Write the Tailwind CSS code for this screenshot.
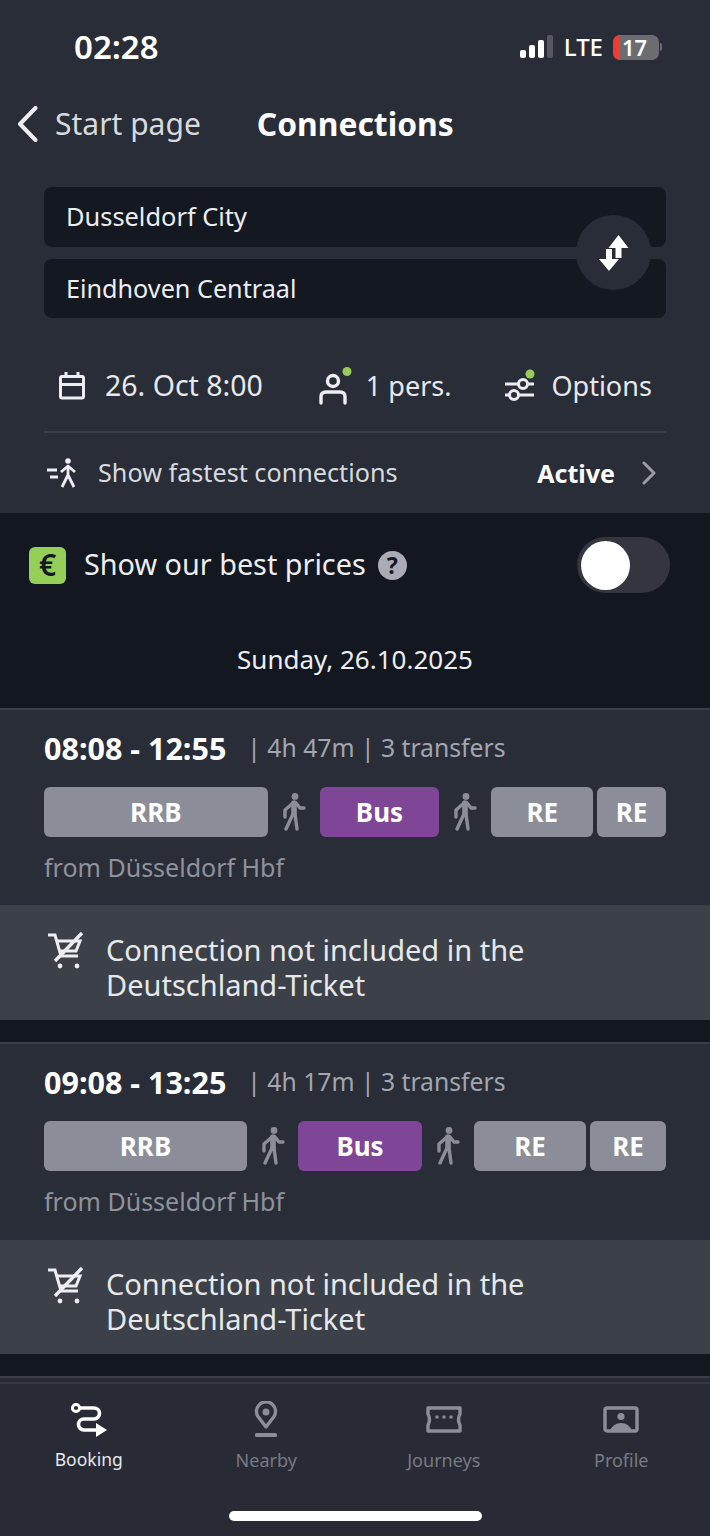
<!DOCTYPE html>
<html>
<head>
<meta charset="utf-8">
<title>Connections</title>
<script src="https://cdn.jsdelivr.net/npm/@tailwindcss/browser@4"></script>
</head>
<body class="bg-[#131720] text-[#eceef1] font-['Noto_Sans',sans-serif]">
<div class="w-[710px] h-[1536px] overflow-hidden flex flex-col">

	<!-- header -->
	<div class="h-[513px] shrink-0 bg-[#292d38] flex flex-col">
		<div class="h-[94px] flex items-center justify-between pl-[74px] pr-[48px]">
			<div class="text-[33px] pb-[2px] font-semibold text-white leading-none">02:28</div>
			<div class="flex items-center">
				<svg width="36" height="24" viewBox="0 0 36 24" fill="#fff"><rect x="2" y="15" width="6" height="8" rx="2"/><rect x="11" y="10" width="6" height="13" rx="2"/><rect x="20" y="5" width="6" height="18" rx="2"/><rect x="29" y="0" width="6" height="23" rx="2" fill="#55585f"/></svg>
				<div class="ml-[10px] text-[24px] font-medium text-white leading-none">LTE</div>
				<div class="ml-[10px] w-[46px] h-[25px] rounded-[7px] bg-[#6b6d72] flex items-center">
					<div class="w-[7px] h-full rounded-l-[7px] bg-[#ef3b30]"></div>
					<div class="ml-[2px] text-[22px] font-semibold text-white leading-none">17</div>
				</div>
				<div class="ml-[1px] w-[2px] h-[8px] rounded-r bg-[#6b6d72]"></div>
			</div>
		</div>

		<div class="h-[62px] flex items-center pl-[17px] pb-[3px]">
			<svg width="21" height="36" viewBox="0 0 21 36" fill="none" stroke="#eceef1" stroke-width="4" stroke-linecap="round" stroke-linejoin="round"><path d="M18.5 2 L3 18 L18.5 34"/></svg>
			<div class="ml-[17px] text-[30px] text-[#d8dade] leading-none">Start page</div>
			<div class="ml-[56px] text-[31.8px] font-bold text-white leading-none">Connections</div>
		</div>

		<div class="relative mx-[44px] mt-[31px] flex flex-col gap-[12px]">
			<div class="h-[60px] rounded-[8px] bg-[#141821] flex items-center pl-[22px] text-[25.4px] leading-none">Dusseldorf City</div>
			<div class="h-[59px] rounded-[8px] bg-[#141821] flex items-center pl-[22px] text-[25.2px] leading-none">Eindhoven Centraal</div>
			<div class="absolute left-[532px] top-[28px] w-[75px] h-[75px] rounded-full bg-[#292d38] flex items-center justify-center">
				<svg width="30" height="36" viewBox="0 0 30 36" fill="#fff"><path d="M19.5 0 L29.5 13 H22.5 V23 H16.5 V13 H9.5 Z"/><path d="M10 36 L0 24 H7 V14 H13 V24 H20 Z"/></svg>
			</div>
		</div>

		<div class="h-[115px] mx-[44px] pt-[22px] shrink-0 flex items-center border-b-2 border-[#3b3f49]">
			<svg class="ml-[15px]" width="26" height="28" viewBox="0 0 26 28" fill="none" stroke="#eceef1" stroke-width="3"><rect x="1.5" y="4.5" width="23" height="21.5" rx="1.5"/><path d="M1.5 12.5 H24.5 M7 0 V5 M19 0 V5"/></svg>
			<div class="ml-[20px] text-[28.5px] text-[#e6e8ec] leading-none">26. Oct 8:00</div>
			<svg class="ml-[56px]" width="34" height="38" viewBox="0 0 34 38" fill="none" stroke="#eceef1" stroke-width="3.4"><circle cx="14" cy="14" r="5.5"/><path d="M2 36 V30 Q2 25 7 25 H21 Q26 25 26 30 V36" stroke-linecap="round"/><circle cx="28" cy="4.5" r="4.5" fill="#95cc5a" stroke="none"/></svg>
			<div class="ml-[13px] text-[27px] text-[#e6e8ec] leading-none">1 pers.</div>
			<svg class="ml-[53px]" width="32" height="34" viewBox="0 0 32 34" fill="none" stroke="#eceef1" stroke-width="3"><path d="M1 15 H30 M1 26 H30"/><circle cx="19" cy="15" r="4.5" fill="#292d38"/><circle cx="10" cy="26" r="4.5" fill="#292d38"/><circle cx="26" cy="5" r="4.5" fill="#95cc5a" stroke="none"/></svg>
			<div class="ml-[15px] text-[27px] text-[#e6e8ec] leading-none">Options</div>
		</div>

		<div class="flex-1 mx-[44px] flex items-center">
			<svg class="ml-[3px]" width="30" height="30" viewBox="0 0 30 30" fill="none" stroke="#eceef1" stroke-width="2.8"><circle cx="21" cy="3" r="2.8" fill="#eceef1" stroke="none"/><path d="M0 12 H10 M3 19 H11" stroke-width="3"/><path d="M21 8 V17 L15 29 M21 17 L27 29 M14 14 L21 8 L28 14" stroke-linejoin="round"/></svg>
			<div class="ml-[21px] text-[25.2px] text-[#d8dade] leading-none">Show fastest connections</div>
			<div class="ml-auto text-[25px] font-bold text-white leading-none">Active</div>
			<svg class="ml-[27px] mr-[10px]" width="14" height="24" viewBox="0 0 14 24" fill="none" stroke="#9a9da5" stroke-width="3" stroke-linecap="round" stroke-linejoin="round"><path d="M2 2 L12 12 L2 22"/></svg>
		</div>
	</div>

	<!-- best prices -->
	<div class="h-[195px] shrink-0 flex flex-col">
		<div class="h-[104px] flex items-center pl-[29px] pr-[40px]">
			<div class="w-[37px] h-[37px] rounded-[6px] bg-[#95cf58] flex items-center justify-center text-[30px] font-semibold text-[#141821] leading-none">€</div>
			<div class="ml-[18px] pb-[2px] text-[28.8px] text-[#eceef1] leading-none">Show our best prices</div>
			<div class="ml-[12px] w-[29px] h-[29px] rounded-full bg-[#a9acb5] flex items-center justify-center text-[23px] font-bold text-[#141821] leading-none">?</div>
			<div class="ml-auto w-[93px] h-[56px] rounded-full bg-[#33363f] flex items-center pl-[4px]">
				<div class="w-[49px] h-[49px] rounded-full bg-white"></div>
			</div>
		</div>
		<div class="text-center text-[26px] text-[#eceef1] leading-none mt-[29px]">Sunday, 26.10.2025</div>
	</div>

	<!-- connection 1 -->
	<div class="h-[197px] shrink-0 bg-[#292d38] border-t-2 border-[#3b3f49] px-[44px] flex flex-col">
		<div class="mt-[22px] h-[32px] flex items-center leading-none">
			<div class="text-[30.5px] font-bold text-white">08:08 - 12:55</div>
			<div class="ml-[21px] text-[24.7px] text-[#a3a6ae]">| 4h 47m | 3 transfers</div>
		</div>
		<div class="mt-[23px] flex h-[50px] text-[26px] font-bold text-white">
			<div class="w-[224px] rounded-[6px] bg-[#8b8e98] flex items-center justify-center">RRB</div>
			<div class="w-[52px] flex items-center justify-center">
				<svg width="24" height="38" viewBox="0 0 24 38" fill="none" stroke="#8b8e98" stroke-width="3.4" stroke-linejoin="round" stroke-linecap="round"><circle cx="13" cy="3.4" r="3.4" fill="#8b8e98" stroke="none"/><path d="M12 10 V20" stroke-width="5.6"/><path d="M11 21 L4 36 M13 21 L15 36 M11 10 L3 17 V24 M14 10 L18 15 H22"/></svg>
			</div>
			<div class="w-[120px] rounded-[6px] bg-[#7f4597] flex items-center justify-center">Bus</div>
			<div class="w-[52px] flex items-center justify-center">
				<svg width="24" height="38" viewBox="0 0 24 38" fill="none" stroke="#8b8e98" stroke-width="3.4" stroke-linejoin="round" stroke-linecap="round"><circle cx="13" cy="3.4" r="3.4" fill="#8b8e98" stroke="none"/><path d="M12 10 V20" stroke-width="5.6"/><path d="M11 21 L4 36 M13 21 L15 36 M11 10 L3 17 V24 M14 10 L18 15 H22"/></svg>
			</div>
			<div class="w-[102px] rounded-[6px] bg-[#8b8e98] flex items-center justify-center">RE</div>
			<div class="w-[69px] ml-[4px] rounded-[6px] bg-[#8b8e98] flex items-center justify-center">RE</div>
		</div>
		<div class="mt-[18px] text-[25px] text-[#8f929a] leading-none">from Düsseldorf Hbf</div>
	</div>
	<div class="h-[115px] shrink-0 bg-[#3c4149] flex pl-[47px]">
		<svg class="mt-[26px]" width="38" height="38" viewBox="0 0 38 38" fill="none" stroke="#eceef1" stroke-width="3"><path d="M1 4 H8 L14 25 H31 M10 10 H33 L29 20 H13"/><path d="M35 2 L8 30" stroke-width="3.4"/><circle cx="13" cy="35" r="2.4" fill="#eceef1" stroke="none"/><circle cx="30" cy="35" r="2.4" fill="#eceef1" stroke="none"/></svg>
		<div class="ml-[21px] mt-[27px] text-[29px] leading-[35px] text-[#e6e8ec]">Connection not included in the<br>Deutschland-Ticket</div>
	</div>
	<div class="h-[22px] shrink-0"></div>

	<!-- connection 2 -->
	<div class="h-[198px] shrink-0 bg-[#292d38] border-t-2 border-[#3b3f49] px-[44px] flex flex-col">
		<div class="mt-[22px] h-[32px] flex items-center leading-none">
			<div class="text-[30.5px] font-bold text-white">09:08 - 13:25</div>
			<div class="ml-[21px] text-[24.7px] text-[#a3a6ae]">| 4h 17m | 3 transfers</div>
		</div>
		<div class="mt-[23px] flex h-[50px] text-[26px] font-bold text-white">
			<div class="w-[203px] rounded-[6px] bg-[#8b8e98] flex items-center justify-center">RRB</div>
			<div class="w-[51px] flex items-center justify-center">
				<svg width="24" height="38" viewBox="0 0 24 38" fill="none" stroke="#8b8e98" stroke-width="3.4" stroke-linejoin="round" stroke-linecap="round"><circle cx="13" cy="3.4" r="3.4" fill="#8b8e98" stroke="none"/><path d="M12 10 V20" stroke-width="5.6"/><path d="M11 21 L4 36 M13 21 L15 36 M11 10 L3 17 V24 M14 10 L18 15 H22"/></svg>
			</div>
			<div class="w-[124px] rounded-[6px] bg-[#7f4597] flex items-center justify-center">Bus</div>
			<div class="w-[52px] flex items-center justify-center">
				<svg width="24" height="38" viewBox="0 0 24 38" fill="none" stroke="#8b8e98" stroke-width="3.4" stroke-linejoin="round" stroke-linecap="round"><circle cx="13" cy="3.4" r="3.4" fill="#8b8e98" stroke="none"/><path d="M12 10 V20" stroke-width="5.6"/><path d="M11 21 L4 36 M13 21 L15 36 M11 10 L3 17 V24 M14 10 L18 15 H22"/></svg>
			</div>
			<div class="w-[112px] rounded-[6px] bg-[#8b8e98] flex items-center justify-center">RE</div>
			<div class="w-[76px] ml-[4px] rounded-[6px] bg-[#8b8e98] flex items-center justify-center">RE</div>
		</div>
		<div class="mt-[18px] text-[25px] text-[#8f929a] leading-none">from Düsseldorf Hbf</div>
	</div>
	<div class="h-[114px] shrink-0 bg-[#3c4149] flex pl-[47px]">
		<svg class="mt-[26px]" width="38" height="38" viewBox="0 0 38 38" fill="none" stroke="#eceef1" stroke-width="3"><path d="M1 4 H8 L14 25 H31 M10 10 H33 L29 20 H13"/><path d="M35 2 L8 30" stroke-width="3.4"/><circle cx="13" cy="35" r="2.4" fill="#eceef1" stroke="none"/><circle cx="30" cy="35" r="2.4" fill="#eceef1" stroke="none"/></svg>
		<div class="ml-[21px] mt-[26px] text-[29px] leading-[35px] text-[#e6e8ec]">Connection not included in the<br>Deutschland-Ticket</div>
	</div>
	<div class="h-[22px] shrink-0"></div>

	<!-- tab bar -->
	<div class="flex-1 bg-[#282b35] border-t-2 border-[#3b3f49] flex flex-col">
		<div class="h-[6px] border-b-2 border-[#353943]"></div>
		<div class="relative flex-1">
			<div class="grid grid-cols-4 pt-[17px]">
				<div class="flex flex-col items-center">
					<svg width="38" height="38" viewBox="0 0 38 38" fill="none" stroke="#fff" stroke-width="3.6"><circle cx="6" cy="7" r="3.6" stroke-width="3"/><path d="M10 7 H24 A5.5 5.5 0 0 1 24 18 H14 A5 5 0 0 0 14 29 H28"/><path d="M26 22 L37 29 L26 36 Z" fill="#fff" stroke="none"/></svg>
					<div class="mt-[12px] text-[17.5px] text-[#e6e8ec] leading-none">Booking</div>
				</div>
				<div class="flex flex-col items-center">
					<svg width="24" height="38" viewBox="0 0 24 38" fill="none" stroke="#8b8e98" stroke-width="3.4"><path d="M12 26 L4 15.5 A9.5 9.5 0 1 1 20 15.5 Z" stroke-linejoin="round"/><circle cx="12" cy="11" r="3.5" fill="#8b8e98" stroke="none"/><rect x="1" y="32" width="22" height="4" rx="1.5" fill="#8b8e98" stroke="none"/></svg>
					<div class="mt-[12px] text-[18px] text-[#777a83] leading-none">Nearby</div>
				</div>
				<div class="flex flex-col items-center">
					<svg width="38" height="38" viewBox="0 0 38 38" fill="none" stroke="#8b8e98" stroke-width="3.4"><path d="M3 7 H35 V13 Q32 18.5 35 24 V30 H3 V24 Q6 18.5 3 13 Z" stroke-linejoin="round"/><path d="M10.5 16 H13.5 M17.5 16 H20.5 M24.5 16 H27.5" stroke-width="3"/></svg>
					<div class="mt-[12px] text-[18px] text-[#777a83] leading-none">Journeys</div>
				</div>
				<div class="flex flex-col items-center">
					<svg width="38" height="38" viewBox="0 0 38 38" fill="none"><rect x="3" y="7" width="32" height="23" rx="2" stroke="#8b8e98" stroke-width="3.4"/><circle cx="19" cy="15.5" r="3.6" fill="#8b8e98"/><path d="M8 30 Q11 22 19 22 Q27 22 30 30 Z" fill="#8b8e98"/></svg>
					<div class="mt-[12px] text-[18px] text-[#777a83] leading-none">Profile</div>
				</div>
			</div>
			<div class="absolute left-[229px] top-[127px] w-[253px] h-[10px] rounded-full bg-white"></div>
		</div>
	</div>
</div>
</body>
</html>
